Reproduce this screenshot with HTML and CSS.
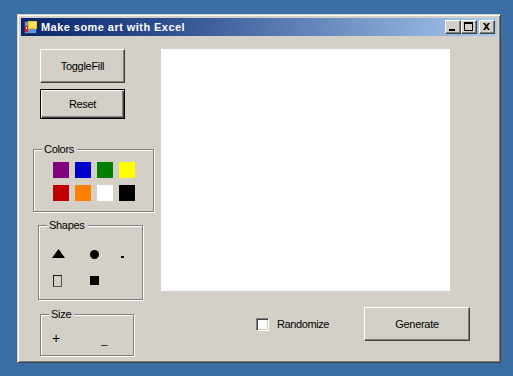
FILE: index.html
```html
<!DOCTYPE html>
<html>
<head>
  <meta charset="UTF-8">
  <title>Make some art with Excel</title>
  <link rel="stylesheet" href="styles.css">
</head>
<body>
  <div class="window">
    <div class="titlebar">
      <svg class="app-icon" width="13" height="13" viewBox="0 0 13 13">
        <rect x="0.5" y="0.5" width="12" height="12" fill="#7f8fb8" stroke="#2a3a70"/>
        <rect x="1" y="5" width="3" height="6" fill="#e02020"/>
        <rect x="2" y="6" width="1" height="2" fill="#ffffff"/>
        <rect x="4" y="0" width="9" height="8" fill="#f0c020"/>
        <rect x="5" y="1" width="7" height="6" fill="#ffe060"/>
        <rect x="5" y="8" width="7" height="4" fill="#5a9ae8"/>
      </svg>
      <span class="title">Make some art with Excel</span>
      <div class="caption-buttons">
        <button class="cap-btn">
          <svg width="14" height="12" viewBox="0 0 14 12"><rect x="3" y="8" width="6" height="2" fill="#000"/></svg>
        </button>
        <button class="cap-btn">
          <svg width="14" height="12" viewBox="0 0 14 12"><rect x="2.5" y="1.5" width="8" height="8" fill="none" stroke="#000"/><rect x="2" y="1" width="9" height="2" fill="#000"/></svg>
        </button>
        <button class="cap-btn close">
          <svg width="14" height="12" viewBox="0 0 14 12"><path d="M3 2h2l1.5 2 1.5-2h2l-2.5 3.5 2.5 3.5h-2l-1.5-2-1.5 2h-2l2.5-3.5z" fill="#000"/></svg>
        </button>
      </div>
    </div>

    <div class="client">
      <div class="sidebar">
        <button class="btn btn-toggle">ToggleFill</button>
        <button class="btn btn-reset">Reset</button>

        <div class="group colors">
          <span class="legend">Colors</span>
          <div class="swatches">
            <span class="swatch purple"></span>
            <span class="swatch blue"></span>
            <span class="swatch green"></span>
            <span class="swatch yellow"></span>
            <span class="swatch red"></span>
            <span class="swatch orange"></span>
            <span class="swatch white"></span>
            <span class="swatch black"></span>
          </div>
        </div>

        <div class="group shapes">
          <span class="legend">Shapes</span>
          <div class="shape-grid">
            <svg class="shape-tri" width="13" height="9" viewBox="0 0 13 9"><polygon points="6.5,0 13,9 0,9" fill="#000"/></svg>
            <span class="shape-circle"></span>
            <span class="shape-line"></span>
            <span class="shape-rect"></span>
            <span class="shape-square"></span>
          </div>
        </div>

        <div class="group size">
          <span class="legend">Size</span>
          <div class="size-row">
            <span class="size-plus">+</span>
            <span class="size-minus">_</span>
          </div>
        </div>
      </div>

      <div class="main">
        <div class="canvas"></div>
        <div class="actions">
          <label class="check"><span class="check-box"></span>Randomize</label>
          <button class="btn btn-generate">Generate</button>
        </div>
      </div>
    </div>
  </div>
</body>
</html>
```

FILE: styles.css
```css
:root {
  --face: #d4d0c8;
  --shadow: #808080;
  --dark: #404040;
  --light: #ffffff;
  --desktop: #3a6ea5;
}

* {
  margin: 0;
  padding: 0;
  box-sizing: border-box;
}

body {
  background: var(--desktop);
  font-family: "Liberation Sans", Arial, sans-serif;
  font-size: 11px;
  color: #000;
  overflow: hidden;
}

/* Window frame */
.window {
  width: 484px;
  height: 349px;
  margin: 14px 0 0 17px;
  padding: 3px;
  background: var(--face);
  border: 1px solid;
  border-color: var(--face) var(--dark) var(--dark) var(--face);
  box-shadow: inset 1px 1px 0 var(--light), inset -1px -1px 0 var(--shadow);
  display: flex;
  flex-direction: column;
}

.titlebar {
  height: 18px;
  display: flex;
  align-items: center;
  padding: 0 2px 0 3px;
  background: linear-gradient(90deg, #0a246a 0%, #2e4f8f 30%, #a6caf0 100%);
}

.app-icon {
  display: block;
  margin-top: 1px;
}

.title {
  margin-left: 4px;
  color: #fff;
  font-weight: bold;
  font-size: 11px;
  letter-spacing: 0.45px;
  line-height: 18px;
}

.caption-buttons {
  margin-left: auto;
  display: flex;
}

.cap-btn {
  width: 16px;
  height: 14px;
  background: var(--face);
  border: 1px solid;
  border-color: var(--light) var(--dark) var(--dark) var(--light);
  box-shadow: inset -1px -1px 0 var(--shadow);
  display: flex;
  align-items: center;
  justify-content: center;
}

.cap-btn svg {
  display: block;
}

.cap-btn.close {
  margin-left: 2px;
}

/* Client area */
.client {
  flex: 1;
  display: flex;
  padding-top: 13px;
}

.sidebar {
  width: 140px;
  display: flex;
  flex-direction: column;
  align-items: flex-start;
}

.btn {
  font-family: "Liberation Sans", Arial, sans-serif;
  font-size: 11px;
  letter-spacing: -0.3px;
  color: #000;
  background: var(--face);
  border: 1px solid;
  border-color: var(--light) var(--dark) var(--dark) var(--light);
  box-shadow: inset -1px -1px 0 var(--shadow);
}

.btn-toggle {
  width: 85px;
  height: 34px;
  margin-left: 19px;
}

.btn-reset {
  width: 85px;
  height: 30px;
  margin: 6px 0 0 19px;
  border: 1px solid #000;
  box-shadow: inset 1px 1px 0 var(--light), inset -1px -1px 0 var(--dark), inset -2px -2px 0 var(--shadow);
}

/* Group boxes */
.group {
  position: relative;
  border: 1px solid var(--shadow);
  box-shadow: inset 1px 1px 0 var(--light), 1px 1px 0 var(--light);
}

.legend {
  position: absolute;
  top: -7px;
  left: 8px;
  padding: 0 3px 0 2px;
  line-height: 13px;
  background: var(--face);
  letter-spacing: -0.3px;
}

.colors {
  width: 121px;
  height: 63px;
  margin: 30px 0 0 12px;
}

.swatches {
  display: grid;
  grid-template-columns: repeat(4, 16px);
  grid-auto-rows: 16px;
  column-gap: 6px;
  row-gap: 7px;
  padding: 12px 0 0 19px;
}

.swatch { display: block; }
.purple { background: #800080; }
.blue { background: #0000cc; }
.green { background: #008000; }
.yellow { background: #ffff00; }
.red { background: #c00000; }
.orange { background: #ff8000; }
.white { background: #ffffff; }
.black { background: #000000; }

.shapes {
  width: 105px;
  height: 75px;
  margin: 13px 0 0 17px;
}

.shape-grid {
  display: grid;
  grid-template-columns: 38px 31px 10px;
  grid-template-rows: 26px 14px;
  align-items: start;
  padding: 23px 0 0 13px;
}

.shape-tri { display: block; }

.shape-circle {
  width: 9px;
  height: 9px;
  margin-top: 1px;
  border-radius: 50%;
  background: #000;
}

.shape-line {
  width: 3px;
  height: 2px;
  margin-top: 7px;
  background: #000;
}

.shape-rect {
  width: 9px;
  height: 12px;
  margin-left: 1px;
  border: 1px solid #1a1a1a;
  border-right-color: #555;
  border-bottom-color: #555;
}

.shape-square {
  width: 9px;
  height: 9px;
  margin-top: 1px;
  background: #000;
}

.size {
  width: 94px;
  height: 42px;
  margin: 14px 0 0 19px;
}

.size-row {
  display: flex;
  align-items: flex-start;
  padding: 16px 0 0 11px;
  font-size: 14px;
  line-height: 15px;
}

.size-minus {
  margin: 2px 0 0 41px;
  font-size: 11px;
}

/* Main column */
.main {
  display: flex;
  flex-direction: column;
}

.canvas {
  width: 289px;
  height: 242px;
  background: #fff;
}

.actions {
  display: flex;
  align-items: center;
  margin-top: 16px;
}

.check {
  width: 108px;
  margin-left: 95px;
  display: flex;
  align-items: center;
  letter-spacing: -0.4px;
}

.check-box {
  width: 13px;
  height: 13px;
  margin-right: 8px;
  background: #fff;
  border: 1px solid;
  border-color: var(--shadow) var(--light) var(--light) var(--shadow);
  box-shadow: inset 1px 1px 0 var(--dark), inset -1px -1px 0 var(--face);
}

.btn-generate {
  width: 106px;
  height: 34px;
}
```
